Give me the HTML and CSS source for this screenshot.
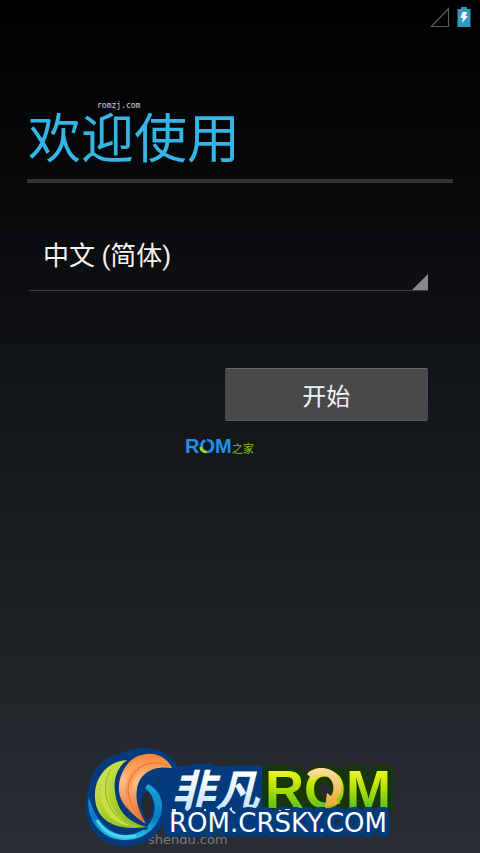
FILE: index.html
```html
<!DOCTYPE html>
<html lang="zh-CN">
<head>
<meta charset="utf-8">
<meta name="viewport" content="width=device-width, initial-scale=1">
<title>欢迎使用</title>
<link rel="stylesheet" href="styles.css">
</head>
<body>
<header class="status">
  <svg class="signal" viewBox="0 0 20 22" aria-hidden="true"><path d="M1.5 20.5H18.5V2.5Z" fill="none" stroke="#5c5c5c" stroke-width="1.2"/></svg>
  <svg class="battery" viewBox="0 0 14 22" aria-hidden="true"><path d="M4 1h6v2h3.500v18H.5V3H4Z" fill="#3398bc"/><path d="M5.500 6H10L8.500 10H11L5 17L6 12H3.500Z" fill="#f4fbff"/></svg>
</header>
<main class="setup">
  <div class="heading">
    <span class="site-mark">romzj.com</span>
    <h1>欢迎使用</h1>
  </div>
  <form class="form">
    <div class="picker">
      <select class="language" aria-label="语言"><option>中文 (简体)</option></select>
      <svg class="corner" viewBox="0 0 16 16" aria-hidden="true"><path d="M0 16H16V0Z" fill="#85878a"/></svg>
    </div>
    <button class="start" type="button">开始</button>
  </form>
  <svg class="rom-home" viewBox="0 0 80 22" role="img" aria-label="ROM之家">
    <text class="home-rom" x="0" y="17">ROM</text>
    <path d="M19 1L22 5M19 18L22 14" fill="none" stroke="#101216" stroke-width="1.500"/>
    <path d="M15.500 11C16 14.500 18.500 16 22 16" fill="none" stroke="#a4d81d" stroke-width="2.500"/>
    <text class="home-cn" x="47" y="17">之家</text>
  </svg>
</main>
<footer class="brand">
  <svg class="brand-logo" viewBox="0 0 320 105" role="img" aria-label="非凡ROM ROM.CRSKY.COM">
    <defs>
      <linearGradient id="lime" x1="0" y1="0" x2="0" y2="1"><stop offset=".2" stop-color="#eef51a"/><stop offset=".5" stop-color="#b0df00"/><stop offset=".85" stop-color="#54bd28"/></linearGradient>
      <linearGradient id="ice" x1="0" y1="0" x2="0" y2="1"><stop offset=".3" stop-color="#fff"/><stop offset="1" stop-color="#b0dbf6"/></linearGradient>
      <linearGradient id="leaf" x1="0" y1="0" x2="1" y2="1"><stop offset="0" stop-color="#dce96c"/><stop offset=".5" stop-color="#a9cd29"/><stop offset="1" stop-color="#85b51f"/></linearGradient>
      <linearGradient id="flame" x1="0" y1="0" x2="0" y2="1"><stop offset="0" stop-color="#f58532"/><stop offset=".4" stop-color="#ffc08a"/><stop offset="1" stop-color="#df5c20"/></linearGradient>
      <linearGradient id="ring" x1="0" y1="0" x2="0" y2="1"><stop offset="0" stop-color="#1ba6df"/><stop offset=".6" stop-color="#087cc1"/><stop offset="1" stop-color="#2cc5e9"/></linearGradient>
      <linearGradient id="gold" x1="0" y1="0" x2="0" y2="1"><stop offset="0" stop-color="#ffe0a0"/><stop offset="1" stop-color="#eda42c"/></linearGradient>
    </defs>
    <text class="under-mark" x="68" y="96">shendu.com</text>
    <path d="M78 26L94 18H182V86H84Z" fill="#043b7c"/>
    <g fill="#043b7c" stroke="#043b7c" stroke-width="13" stroke-linejoin="round">
      <path d="M14 47C8 70 20 92 45 92C68 92 80 75 80 57C79 47 75 41 69 34C72 25 80 21 90 18C80 4 55 4 43 12C26 14 15 28 14 47Z"/>
    </g>
    <path d="M9 49C5 71 21 92 45 92C68 92 83 74 82 56C81 47 76 40 68 36L65 40C74 47 77 59 73 69C68 81 57 87 45 87C27 86 14 70 9 49Z" fill="url(#ring)"/>
    <ellipse cx="67" cy="58" rx="6" ry="14" fill="#252a31"/>
    <path d="M17 72C25 86 37 91 56 88" fill="none" stroke="#48d7ee" stroke-width="3"/>
    <path class="leaf-edge" d="M47 12C28 13 14 29 15 50C16 71 34 84 67 79C46 74 37 61 35 44C33 30 38 19 47 12Z" fill="url(#leaf)"/>
    <path d="M43 14C26 26 24 45 33 60C39 71 48 77 60 79C34 79 21 64 21 45C21 31 30 20 43 14Z" fill="#c9df48"/>
    <path d="M31 21C19 43 27 68 54 79" fill="none" stroke="#88b61d" stroke-width="1"/>
    <path class="leaf-edge" d="M92 20C83 1 57 2 46 18C37 31 36 47 46 59C53 67 60 72 66 76C59 63 55 53 57 41C59 26 72 17 92 20Z" fill="url(#flame)"/>
    <path d="M91 20C72 10 55 21 52 39C50 52 56 66 65 75C50 66 43 54 45 39C47 20 67 3 91 20Z" fill="#f99652" opacity=".7"/>
    <path d="M89 18C65 8 48 24 48 43C49 55 55 66 64 75" fill="none" stroke="#e66f28" stroke-width="1"/>
    <text class="brand-cn" fill="url(#ice)" x="91" y="59">非凡</text>
    <text class="brand-rom" fill="url(#lime)" x="185" y="60">ROM</text>
    <path d="M227 26C234 18 250 18 257 27C264 36 262 46 256 52L261 55L245 60L247 45L251 48C255 42 254 33 248 29C242 25 237 27 233 32Z" fill="url(#gold)"/>
    <text class="brand-url" fill="#fff" x="89" y="84">ROM.CRSKY.COM</text>
    <path d="M92 61h4v3h-4ZM124 61h2v2h-2ZM149 61l3-2v3l4 3-2 1ZM199 62h2v1h-2ZM205 61h5v1h-5Z" fill="#d9e3e8"/>
  </svg>
</footer>
</body>
</html>
```
FILE: styles.css
```css
* {
  box-sizing: border-box;
}

body {
  margin: 0;
  min-height: 100vh;
  display: flex;
  flex-direction: column;
  background: linear-gradient(#000 0%, #07080a 20%, #15181b 52%, #292d34 100%);
  color: #f3f3f3;
  font-family: Roboto, "Noto Sans CJK SC", sans-serif;
}

.status {
  display: flex;
  justify-content: flex-end;
  gap: 7px;
  padding: 6px 9px 0;
}

.signal {
  width: 20px;
  height: 22px;
}

.battery {
  width: 14px;
  height: 22px;
}

.setup {
  flex: 1;
  padding: 72px 27px 0;
}

.heading {
  position: relative;
  border-bottom: 4px solid #333435;
}

.site-mark {
  position: absolute;
  left: 70px;
  top: 0;
  font: 8px/12px "DejaVu Sans Mono", monospace;
  color: #d5d5d5;
}

h1 {
  margin: 0;
  padding: 4px 0 3px 1px;
  font-size: 53px;
  line-height: 72px;
  font-weight: 400;
  color: #33b5e5;
}

.form {
  display: flex;
  flex-direction: column;
  padding: 49px 25px 0 2px;
}

.picker {
  position: relative;
  border-bottom: 1px solid #3e4144;
}

.language {
  display: block;
  width: 100%;
  height: 58px;
  padding: 0 24px 10px 14px;
  appearance: none;
  border: 0;
  background: transparent;
  color: inherit;
  font: 26px Roboto, "Noto Sans CJK SC", sans-serif;
}

.corner {
  position: absolute;
  right: 0;
  bottom: 0;
  width: 16px;
  height: 16px;
}

.start {
  align-self: flex-end;
  width: 51%;
  height: 53px;
  margin-top: 77px;
  padding: 0;
  border: 0;
  border-top: 1px solid #67696b;
  border-bottom: 1px solid #5a5c5d;
  border-radius: 2px;
  background: #48494b;
  color: #f3f3f3;
  font: 24px Roboto, "Noto Sans CJK SC", sans-serif;
}

.rom-home {
  display: block;
  width: 80px;
  height: 22px;
  margin: 15px 0 0 158px;
}

.home-rom {
  font: bold 20px "Liberation Sans", sans-serif;
  fill: #2390e8;
}

.home-cn {
  font: 11px "Noto Sans CJK SC", sans-serif;
  fill: #86bd25;
}

.brand {
  padding-left: 80px;
}

.brand-logo {
  display: block;
  width: 320px;
  height: 105px;
}

.leaf-edge {
  stroke: #043b7c;
  stroke-width: 5px;
  paint-order: stroke;
}

.brand-cn,
.brand-rom,
.brand-url {
  stroke: #043b7c;
  stroke-width: 12px;
  stroke-linejoin: round;
  paint-order: stroke;
}

.brand-cn {
  font: italic 700 44px "Noto Sans CJK SC", sans-serif;
}

.brand-rom {
  font: bold 54px "Liberation Sans", sans-serif;
  stroke: #173707;
}

.brand-url {
  font: 26px "DejaVu Sans", sans-serif;
  stroke-width: 10px;
}

.under-mark {
  font: 13px "DejaVu Sans", sans-serif;
  fill: #7b7d80;
}
```
